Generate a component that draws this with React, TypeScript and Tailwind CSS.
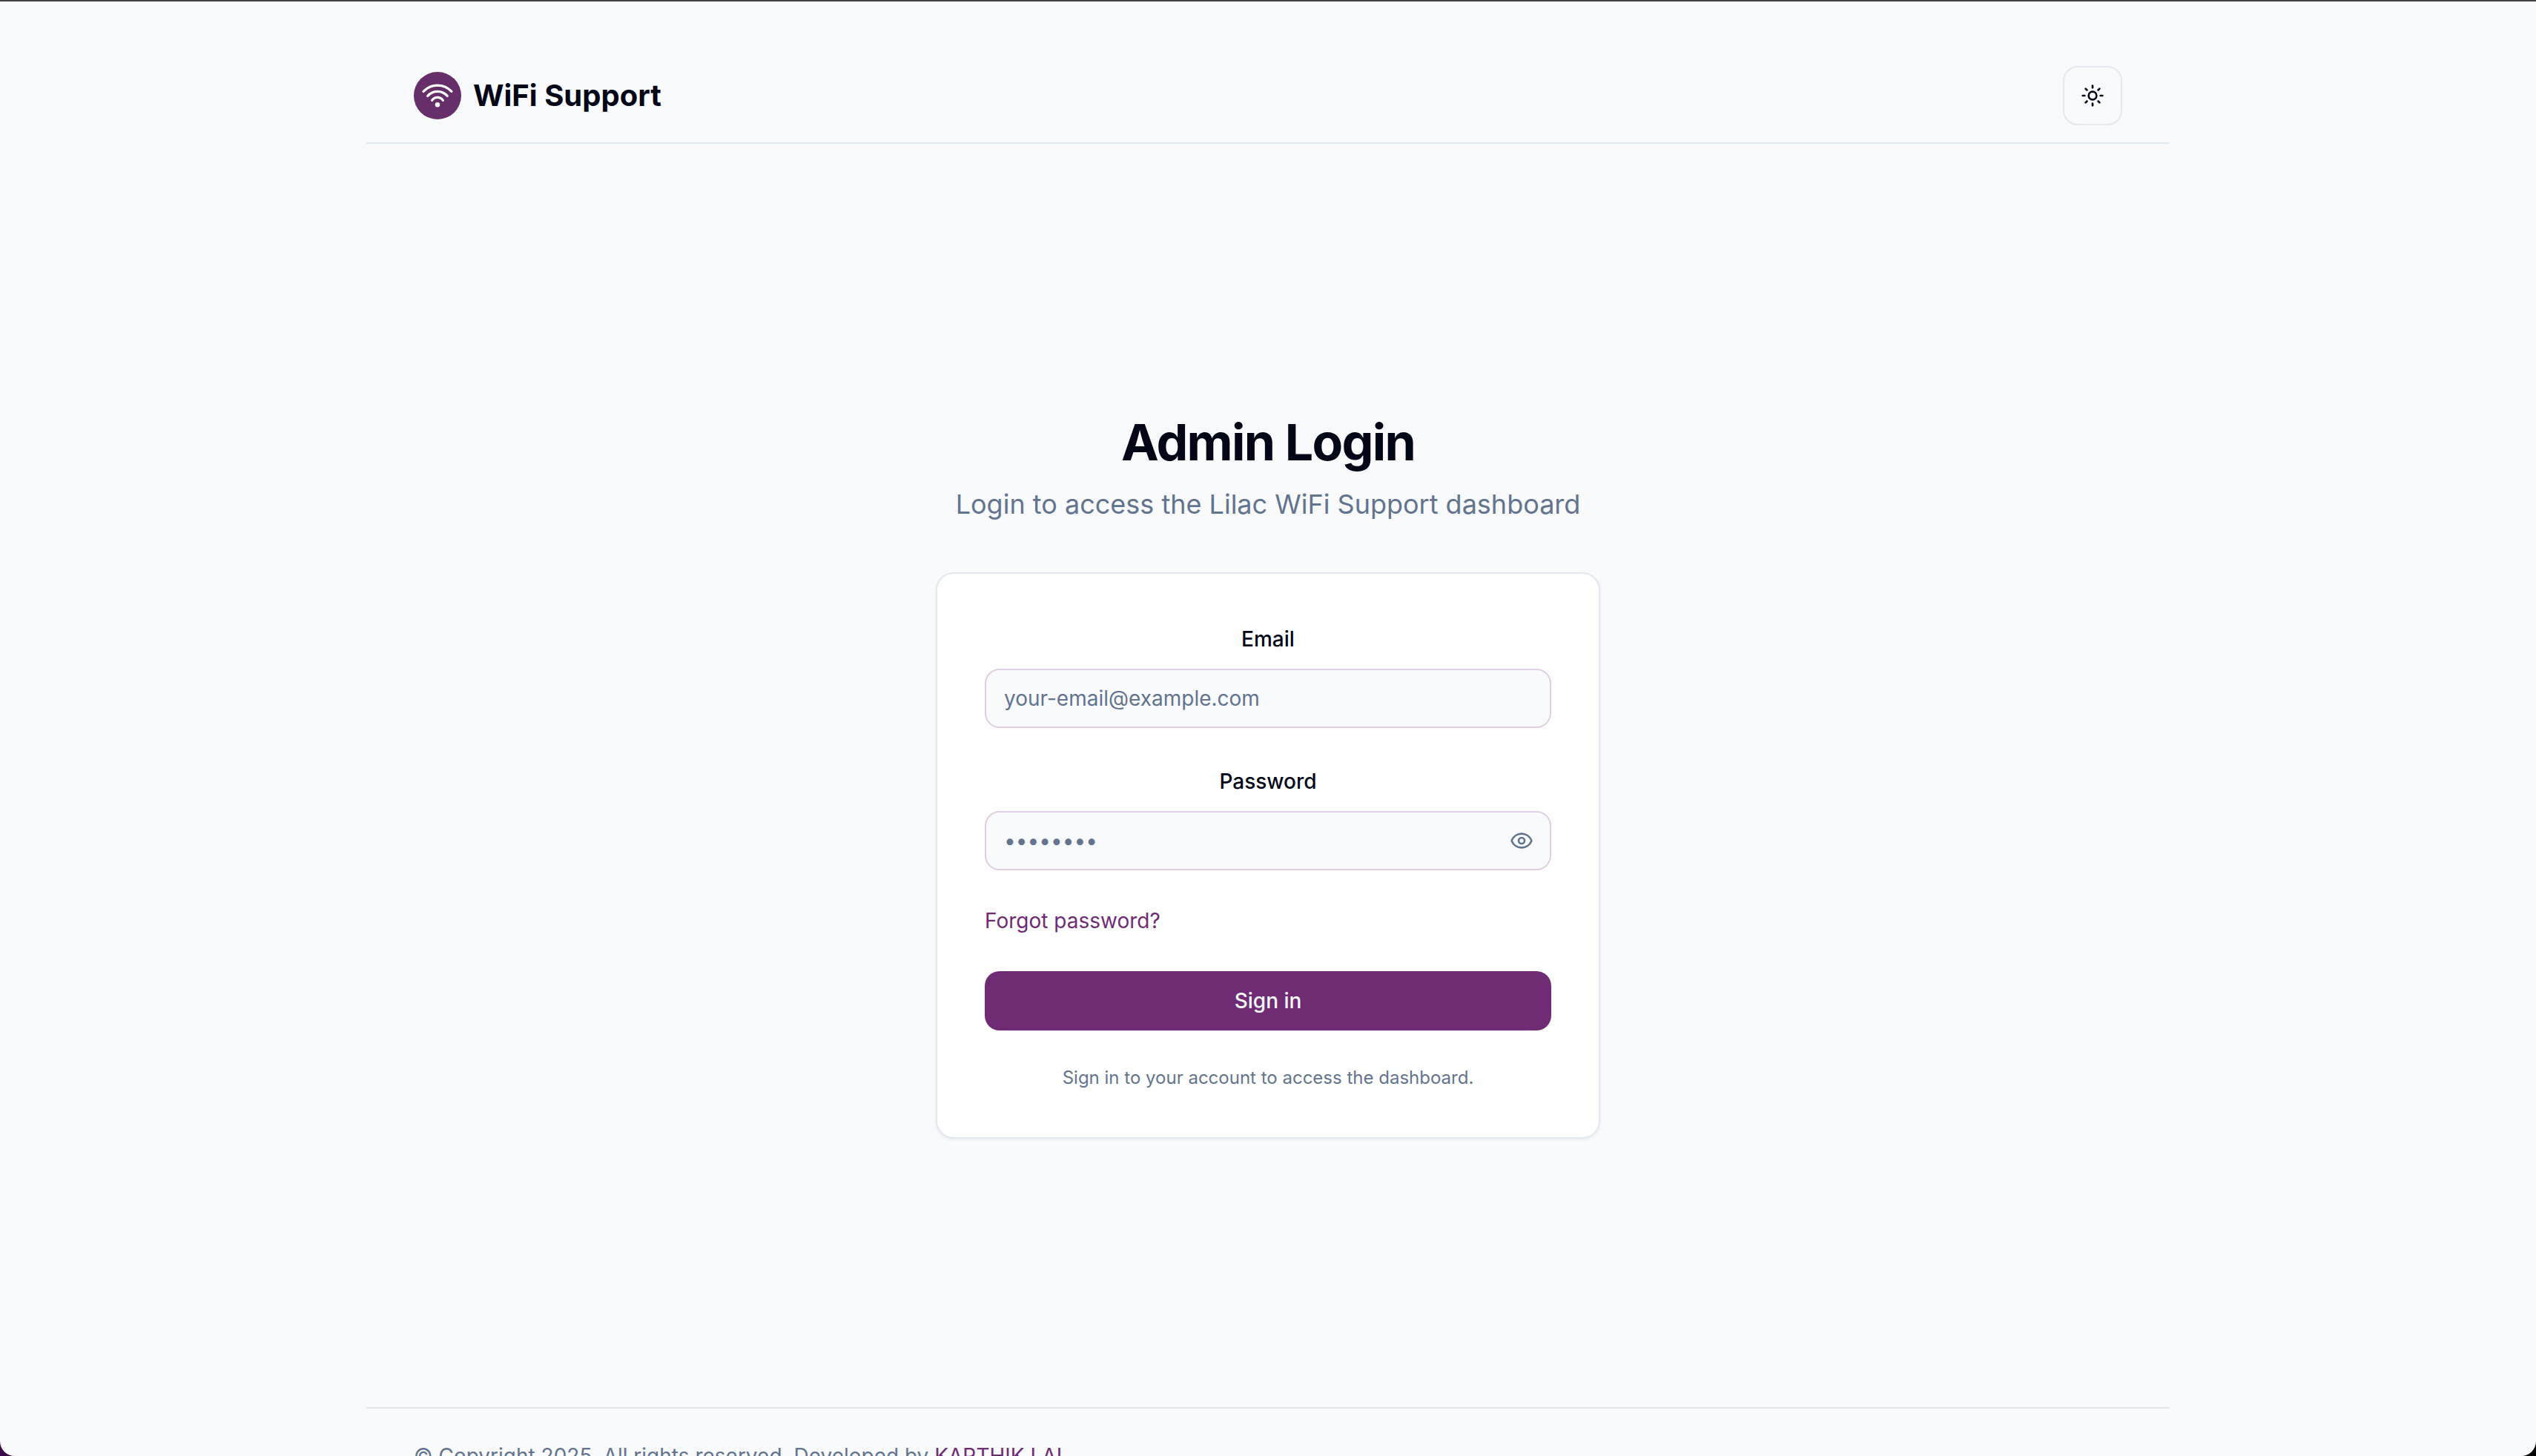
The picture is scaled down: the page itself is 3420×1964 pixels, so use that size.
import { useState } from "react";
import { Eye, EyeOff, Sun } from "lucide-react";

function Logo() {
  return (
    <svg viewBox="0 0 64 64" className="size-16" aria-hidden="true">
      <circle cx="32" cy="32" r="32" fill="#672f69" />
      <g fill="none" stroke="#fff" strokeWidth="3.2" strokeLinecap="round">
        <path d="M13 26.4a25.8 25.8 0 0 1 38 0" />
        <path d="M18.7 32.5a17.4 17.4 0 0 1 26.6 0" />
        <path d="M24.6 38.4a8.8 8.8 0 0 1 14.8 0" />
      </g>
      <circle cx="32" cy="44.2" r="3.2" fill="#fff" />
    </svg>
  );
}

function Header() {
  return (
    <header className="flex items-center justify-between border-b-2 border-slate-200 px-16 py-[23px]">
      <a href="#" className="flex items-center gap-4">
        <Logo />
        <span className="text-[40px] leading-14 font-bold">WiFi Support</span>
      </a>
      <button
        type="button"
        aria-label="Toggle theme"
        className="flex size-20 items-center justify-center rounded-[20px] border-2 border-slate-200"
      >
        <Sun size={32} />
      </button>
    </header>
  );
}

const fieldClass =
  "h-20 w-full rounded-[20px] border-2 border-[#dfcfe1] bg-[#f9fafc] px-6 text-[28px] leading-10 placeholder:text-slate-500 placeholder:opacity-100 focus:outline-none";

function LoginForm() {
  const [visible, setVisible] = useState(false);
  return (
    <form
      onSubmit={(e) => e.preventDefault()}
      className="flex w-full flex-col gap-12 rounded-3xl border-2 border-slate-200 bg-white p-16 shadow-[0_2px_4px_rgba(0,0,0,0.05)]"
    >
      <div className="flex flex-col gap-4">
        <label htmlFor="email" className="text-center text-[28px] leading-12 font-medium">
          Email
        </label>
        <input id="email" type="email" placeholder="your-email@example.com" className={fieldClass} />
      </div>
      <div className="flex flex-col gap-4">
        <label htmlFor="password" className="text-center text-[28px] leading-12 font-medium">
          Password
        </label>
        <div className="relative">
          <input
            id="password"
            type={visible ? "text" : "password"}
            placeholder="••••••••"
            className={fieldClass}
          />
          <button
            type="button"
            aria-label={visible ? "Hide password" : "Show password"}
            onClick={() => setVisible(!visible)}
            className="absolute inset-y-0 right-0 flex w-20 items-center justify-center text-slate-500"
          >
            {visible ? <EyeOff size={32} /> : <Eye size={32} />}
          </button>
        </div>
      </div>
      <a href="#" className="self-start text-[28px] leading-10 text-[#6f2b74]">
        Forgot password?
      </a>
      <button
        type="submit"
        className="h-20 w-full rounded-[20px] bg-[#6f2b74] text-[28px] leading-10 font-medium text-slate-50"
      >
        Sign in
      </button>
      <p className="text-center text-2xl leading-8 text-slate-500">
        Sign in to your account to access the dashboard.
      </p>
    </form>
  );
}

export default function App() {
  return (
    <div className="h-screen bg-linear-to-r from-[#3b0a4a] to-black to-50% font-['Inter',sans-serif] text-[#020617]">
      <div className="h-full overflow-y-auto rounded-b-[20px] border-t-2 border-[#444446] bg-[#f9fafc] [scrollbar-width:none]">
        <div className="mx-auto flex min-h-[calc(100vh+62px)] max-w-[2560px] flex-col px-16 pt-16">
          <Header />
          <main className="flex flex-1 items-center justify-center">
            <div className="flex w-full max-w-4xl flex-col items-center">
              <h1 className="text-center text-[68px] leading-20 font-bold tracking-tight">Admin Login</h1>
              <p className="mt-4 mb-16 text-center text-4xl leading-14 text-slate-500">
                Login to access the Lilac WiFi Support dashboard
              </p>
              <LoginForm />
            </div>
          </main>
          <footer className="border-t-2 border-slate-200 px-16 py-10">
            <p className="text-[28px] leading-12 text-slate-500">
              © Copyright 2025. All rights reserved. Developed by{" "}
              <a href="#" className="text-[#6f2b74]">
                KARTHIK LAL
              </a>
            </p>
          </footer>
        </div>
      </div>
    </div>
  );
}
